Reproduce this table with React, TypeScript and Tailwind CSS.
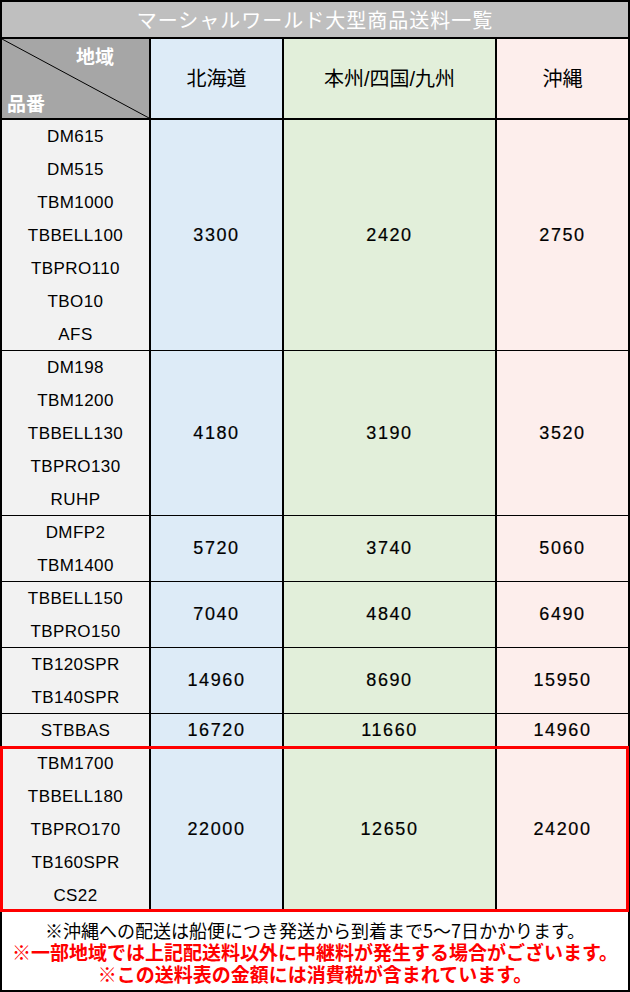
import React from "react";

type Group = {
  items: string[];
  h: string;
  prices: [string, string, string];
};

const groups: Group[] = [
  {
    items: ["DM615", "DM515", "TBM1000", "TBBELL100", "TBPRO110", "TBO10", "AFS"],
    h: "h-[230px]",
    prices: ["3300", "2420", "2750"],
  },
  {
    items: ["DM198", "TBM1200", "TBBELL130", "TBPRO130", "RUHP"],
    h: "h-[164px]",
    prices: ["4180", "3190", "3520"],
  },
  { items: ["DMFP2", "TBM1400"], h: "h-[65px]", prices: ["5720", "3740", "5060"] },
  { items: ["TBBELL150", "TBPRO150"], h: "h-[65px]", prices: ["7040", "4840", "6490"] },
  { items: ["TB120SPR", "TB140SPR"], h: "h-[65px]", prices: ["14960", "8690", "15950"] },
  { items: ["STBBAS"], h: "h-[32px]", prices: ["16720", "11660", "14960"] },
  {
    items: ["TBM1700", "TBBELL180", "TBPRO170", "TB160SPR", "CS22"],
    h: "h-[164px]",
    prices: ["22000", "12650", "24200"],
  },
];

const colBg = ["bg-[#ddebf7]", "bg-[#e2efda]", "bg-[#fdeeec]"];

export default function App() {
  return (
    <div className="relative w-[630px] bg-black p-[2px] font-['Liberation_Sans','Noto_Sans_CJK_JP',sans-serif] text-black">
      {/* title */}
      <div className="flex h-[35px] items-center justify-center bg-[#bfbfbf] pt-[2px] text-[20px] tracking-[1px] text-white">
        マーシャルワールド大型商品送料一覧
      </div>

      {/* header */}
      <div className="mt-[2px] grid h-[79px] grid-cols-[147px_131px_211px_131px] gap-x-[2px]">
        <div className="relative bg-[#a6a6a6] font-bold text-white">
          <svg className="absolute inset-0" width="147" height="79" viewBox="0 0 147 79">
            <line x1="0" y1="0" x2="147" y2="79" stroke="#000" strokeWidth="1" />
          </svg>
          <span className="absolute left-[74px] top-[7px] text-[19px] leading-[24px]">地域</span>
          <span className="absolute left-[5px] top-[54px] text-[19px] leading-[24px]">品番</span>
        </div>
        <div className={`flex items-center justify-center text-[20px] ${colBg[0]}`}>北海道</div>
        <div className={`flex items-center justify-center text-[20px] ${colBg[1]}`}>本州/四国/九州</div>
        <div className={`flex items-center justify-center text-[20px] ${colBg[2]}`}>沖縄</div>
      </div>

      {/* body */}
      <div className="mt-[2px] flex flex-col gap-y-px">
        {groups.map((g, i) => (
          <div
            key={i}
            className={`grid shrink-0 grid-cols-[147px_131px_211px_131px] grid-rows-1 gap-x-[2px] ${g.h}`}
          >
            <div className="flex min-h-0 flex-col bg-[#f2f2f2]">
              {g.items.map((it) => (
                <div
                  key={it}
                  className="flex h-[33px] shrink-0 items-center justify-center text-[17px] tracking-[0.4px]"
                >
                  {it}
                </div>
              ))}
            </div>
            {g.prices.map((p, j) => (
              <div
                key={j}
                className={`flex items-center justify-center text-[18px] tracking-[1.6px] [-webkit-text-stroke:0.2px_black] ${colBg[j]}`}
              >
                {p}
              </div>
            ))}
          </div>
        ))}

        {/* notes */}
        <div className="h-[78px] shrink-0 bg-white pt-[7px] text-center leading-[22px] font-['Noto_Sans_CJK_JP','Liberation_Sans',sans-serif]">
          <div className="text-[18px]">※沖縄への配送は船便につき発送から到着まで5～7日かかります。</div>
          <div className="text-[19px] font-bold text-[#ff0000]">
            ※一部地域では上記配送料以外に中継料が発生する場合がございます。
          </div>
          <div className="text-[19px] font-bold text-[#ff0000]">※この送料表の金額には消費税が含まれています。</div>
        </div>
      </div>

      {/* highlight box */}
      <div className="pointer-events-none absolute left-0 top-[746px] h-[166px] w-[629px] border-[3px] border-[#ff0000]" />
    </div>
  );
}
